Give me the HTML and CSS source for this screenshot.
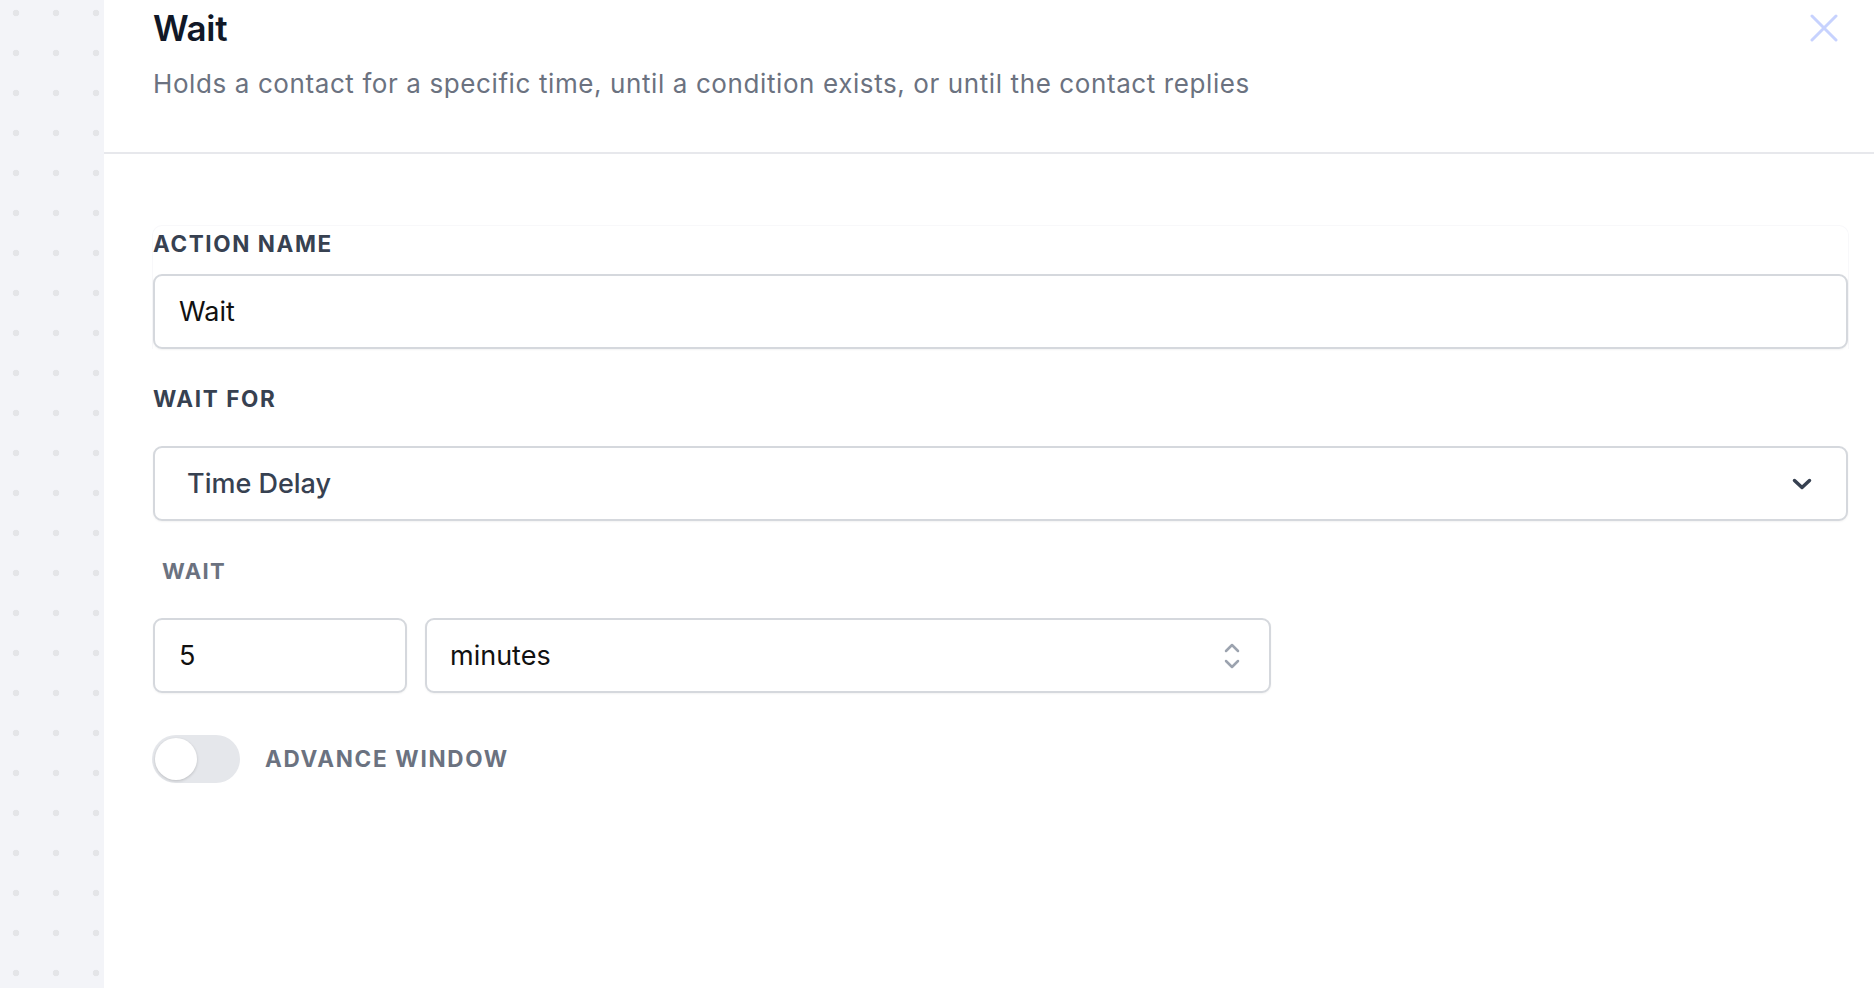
FILE: index.html
```html
<!DOCTYPE html>
<html lang="en">
<head>
<meta charset="utf-8">
<title>Wait</title>
<link rel="stylesheet" href="styles.css">
</head>
<body>
<div class="app">
  <aside class="canvas"></aside>
  <main class="panel">
    <header class="header">
      <div class="header-text">
        <h1 class="title">Wait</h1>
        <p class="subtitle">Holds a contact for a specific time, until a condition exists, or until the contact replies</p>
      </div>
      <button class="close" aria-label="Close">
        <svg width="28" height="28" viewBox="0 0 28 28" fill="none" stroke="#c7d2fe" stroke-width="3" stroke-linecap="round"><path d="M2 2L26 26M26 2L2 26"/></svg>
      </button>
    </header>
    <section class="form">
      <div class="card">
        <label class="label">ACTION NAME</label>
        <div class="input input-name">Wait</div>
      </div>
      <label class="label label-waitfor">WAIT FOR</label>
      <div class="select select-main">
        <span>Time Delay</span>
        <svg width="20" height="12" viewBox="0 0 20 12" fill="none" stroke="#374151" stroke-width="3.5" stroke-linecap="round" stroke-linejoin="round"><path d="M2.5 2.5L10 9.5L17.5 2.5"/></svg>
      </div>
      <label class="label label-wait">WAIT</label>
      <div class="row">
        <div class="input input-num">5</div>
        <div class="select select-unit">
          <span>minutes</span>
          <svg width="16" height="26" viewBox="0 0 16 26" fill="none" stroke="#9ca3af" stroke-width="2.5" stroke-linecap="round" stroke-linejoin="round"><path d="M2 8L8 2L14 8M2 18L8 24L14 18"/></svg>
        </div>
      </div>
      <div class="toggle-row">
        <div class="toggle"><div class="knob"></div></div>
        <span class="toggle-label">ADVANCE WINDOW</span>
      </div>
    </section>
  </main>
</div>
</body>
</html>
```

FILE: styles.css
```css
* { box-sizing: border-box; }
html, body { margin: 0; padding: 0; }
body {
  font-family: Inter, "Noto Sans", "Liberation Sans", sans-serif;
  background: #fff;
}
.app {
  display: flex;
  width: 1874px;
  height: 988px;
  overflow: hidden;
}
.canvas {
  width: 104px;
  flex: none;
  background-color: #f3f4f8;
  background-image: radial-gradient(circle, #e4e5e8 3px, transparent 3.6px);
  background-size: 40px 40px;
  background-position: -4px -7px;
}
.panel {
  flex: 1;
  background: #fff;
  display: flex;
  flex-direction: column;
}
.header {
  display: flex;
  justify-content: space-between;
  align-items: flex-start;
  padding: 7px 36px 0 49px;
  height: 154px;
  border-bottom: 2px solid #e7e8ec;
}
.title {
  margin: 0;
  font-size: 35px;
  line-height: 42px;
  font-weight: 600;
  color: #111827;
  letter-spacing: -0.3px;
}
.subtitle {
  margin: 19px 0 0;
  font-size: 26px;
  line-height: 32px;
  color: #6b7280;
  font-weight: 400;
  letter-spacing: 0.6px;
}
.close {
  margin-top: 7px;
  padding: 0;
  border: 0;
  background: none;
  width: 28px;
  height: 28px;
  display: block;
}
.close svg { display: block; }
.form {
  padding: 71px 26px 0 49px;
  display: flex;
  flex-direction: column;
}
.card {
  border: 1px solid #f8f8fa;
  border-bottom: 0;
  border-radius: 10px 10px 0 0;
  display: flex;
  flex-direction: column;
  padding-top: 4px;
  margin-left: -1px;
  margin-right: -1px;
}
.label {
  display: block;
  font-size: 22.5px;
  line-height: 28px;
  font-weight: 700;
  letter-spacing: 1.6px;
  color: #374151;
}
.input, .select {
  height: 75px;
  border: 2px solid #d5d8dd;
  border-radius: 9px;
  background: #fff;
  box-shadow: 0 1px 2px rgba(0,0,0,0.05);
  display: flex;
  align-items: center;
  font-size: 27px;
  color: #111;
}
.input-name {
  margin-top: 16px;
  padding-left: 24px;
}
.label-waitfor { margin-top: 36px; }
.select-main {
  margin-top: 33px;
  height: 75px;
  padding: 0 34px 0 32px;
  justify-content: space-between;
  font-weight: 500;
  color: #374151;
}
.label-wait {
  margin-top: 36px;
  margin-left: 9px;
  color: #6b7280;
  font-size: 22px;
  letter-spacing: 1.4px;
}
.row {
  margin-top: 33px;
  display: flex;
  gap: 18px;
}
.input-num {
  width: 254px;
  height: 75px;
  padding-left: 24px;
}
.select-unit {
  width: 846px;
  height: 75px;
  padding: 0 29px 0 23px;
  justify-content: space-between;
}
.toggle-row {
  margin-top: 42px;
  display: flex;
  align-items: center;
  gap: 25px;
}
.toggle {
  width: 88px;
  height: 48px;
  border-radius: 24px;
  background: #e5e7eb;
  padding: 3px;
  margin-left: -1px;
}
.knob {
  width: 42px;
  height: 42px;
  border-radius: 50%;
  background: #fff;
  box-shadow: 0 1px 3px rgba(0,0,0,0.18);
}
.toggle-label {
  font-size: 22.5px;
  font-weight: 700;
  letter-spacing: 1.7px;
  color: #6b7280;
  line-height: 28px;
}
```
